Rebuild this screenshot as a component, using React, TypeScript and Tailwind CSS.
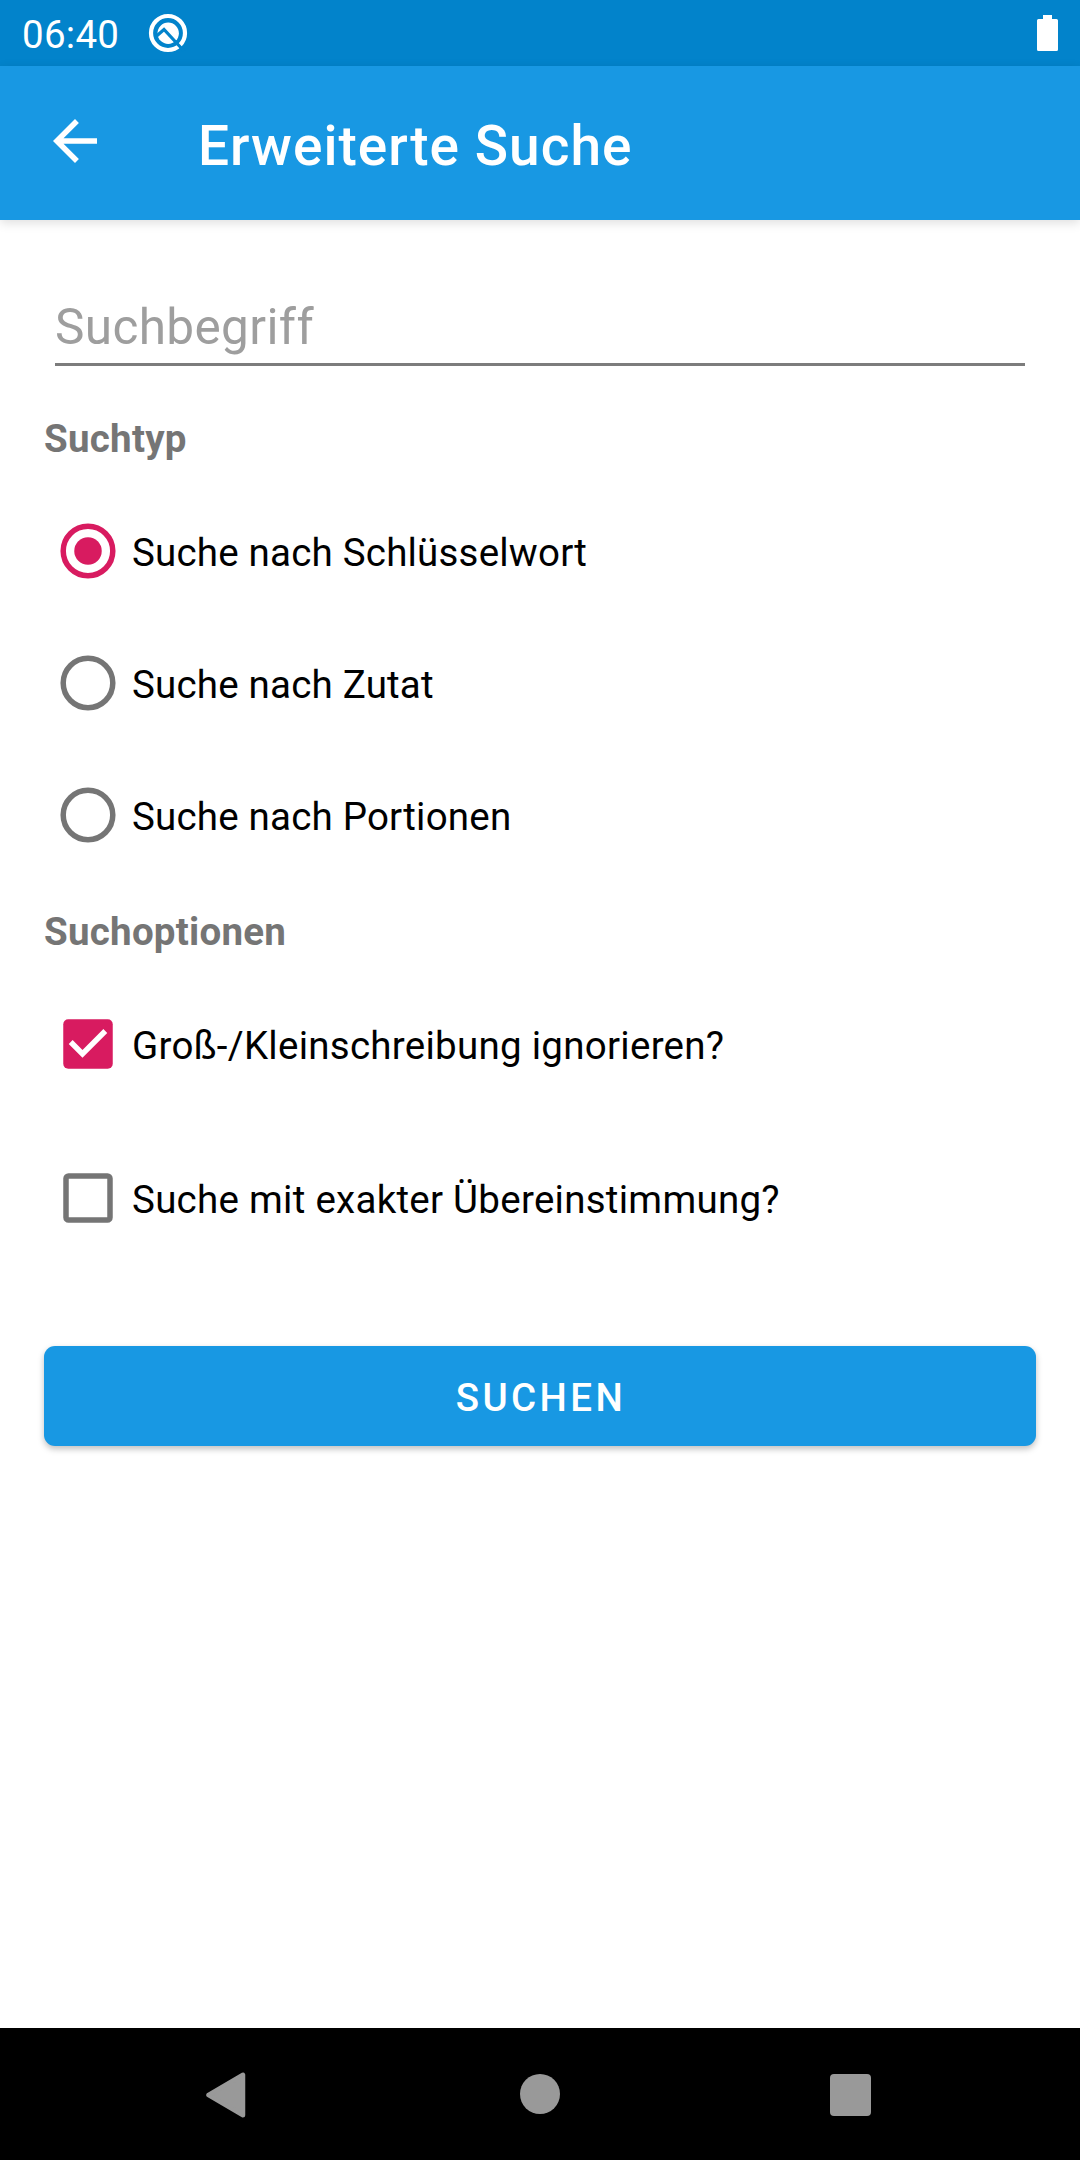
import { useState } from "react";

function StatusBar() {
  return (
    <div className="flex h-[66px] items-center bg-[#0283cb] pl-[22px] pr-[22px]">
      <span className="relative top-[1px] text-[38.5px] leading-[45px] tracking-[0.28px] text-white">06:40</span>
      <svg className="ml-[29px] size-[40px]" viewBox="0 0 40 40">
        <circle cx="20" cy="20" r="17" fill="none" stroke="#fff" strokeWidth="4.200" />
        <circle cx="20.200" cy="20.200" r="10.700" fill="#fff" />
        <path d="M8 23.500L16 16.500L36 38" fill="none" stroke="#0283cb" strokeWidth="3.200" />
      </svg>
      <svg className="ml-auto h-[36px] w-[21px]" viewBox="0 0 21 36">
        <path d="M6 0h9v4h4.500a1.500 1.500 0 0 1 1.500 1.500v29a1.500 1.500 0 0 1-1.500 1.500h-18a1.500 1.500 0 0 1-1.500-1.500v-29a1.500 1.500 0 0 1 1.500-1.500h4.500z" fill="#fff" />
      </svg>
    </div>
  );
}

function AppBar() {
  return (
    <header className="relative flex h-[154px] items-center bg-[#1898e3] pl-[42px] shadow-[0_3px_10px_rgba(0,0,0,0.13)]">
      <button aria-label="Zurück" className="-mt-[4px]">
        <svg className="size-[66px]" viewBox="0 0 24 24" fill="#fff">
          <path d="M20 11H7.830l5.590-5.590L12 4l-8 8 8 8 1.410-1.410L7.830 13H20v-2z" />
        </svg>
      </button>
      <h1 className="ml-[90px] mt-[5px] text-[55px] font-medium leading-[64px] tracking-[1.04px] text-white">
        Erweiterte Suche
      </h1>
    </header>
  );
}

function Radio({ label, checked, onSelect }: { label: string; checked: boolean; onSelect: () => void }) {
  return (
    <button role="radio" aria-checked={checked} onClick={onSelect} className="flex h-[132px] items-center">
      <svg className="size-[88px]" viewBox="0 0 88 88">
        <circle cx="44" cy="44" r="24.800" fill="none" stroke={checked ? "#d81b60" : "#757575"} strokeWidth="5.500" />
        {checked && <circle cx="44" cy="44" r="13.750" fill="#d81b60" />}
      </svg>
      <span className="mt-[3px] text-[38.5px] leading-[45px] tracking-[0.2px] text-black">{label}</span>
    </button>
  );
}

function Checkbox({ label, checked, onToggle }: { label: string; checked: boolean; onToggle: () => void }) {
  return (
    <button role="checkbox" aria-checked={checked} onClick={onToggle} className="flex h-[88px] items-center">
      <svg className="size-[88px]" viewBox="0 0 88 88">
        {checked ? (
          <>
            <rect x="19.250" y="19.250" width="49.500" height="49.500" rx="5" fill="#d81b60" />
            <path
              transform="translate(11 11) scale(2.75)"
              d="M10 17l-5-5 1.410-1.410L10 14.170l7.590-7.590L19 8l-9 9z"
              fill="#fff"
            />
          </>
        ) : (
          <rect x="22" y="22" width="44" height="44" rx="2.500" fill="none" stroke="#757575" strokeWidth="5.500" />
        )}
      </svg>
      <span className="mt-[3px] text-[38.5px] leading-[45px] tracking-[0.27px] text-black">{label}</span>
    </button>
  );
}

function NavBar() {
  return (
    <nav className="flex h-[132px] items-center justify-between bg-black pl-[205px] pr-[209px]">
      <svg className="mt-[1px] h-[46px] w-[45px]" viewBox="0 0 45 46">
        <path d="M3.500 23L38 2.800V43.200Z" fill="#999" stroke="#999" strokeWidth="4.500" strokeLinejoin="round" />
      </svg>
      <div className="size-[40px] rounded-full bg-[#999]" />
      <div className="mt-[1px] h-[42px] w-[41px] rounded-[4px] bg-[#999]" />
    </nav>
  );
}

const searchTypes = ["Suche nach Schlüsselwort", "Suche nach Zutat", "Suche nach Portionen"];

export default function App() {
  const [type, setType] = useState(0);
  const [ignoreCase, setIgnoreCase] = useState(true);
  const [exact, setExact] = useState(false);

  return (
    <div className="flex h-[2160px] w-[1080px] flex-col bg-white font-['Roboto',sans-serif]">
      <StatusBar />
      <AppBar />
      <main className="flex flex-1 flex-col px-[44px]">
        <input
          placeholder="Suchbegriff"
          className="mx-[11px] mt-[77px] h-[69px] border-b-[3px] border-[#7c7c7c] pb-[6px] text-[49.5px] leading-[58px] tracking-[0.37px] outline-none placeholder:text-[#9e9e9e]"
        />
        <h2 className="mt-[50px] text-[38.5px] font-bold leading-[45px] tracking-[0.25px] text-[#757575]">Suchtyp</h2>
        <div role="radiogroup" className="mt-[24px] flex flex-col">
          {searchTypes.map((label, i) => (
            <Radio key={label} label={label} checked={type === i} onSelect={() => setType(i)} />
          ))}
        </div>
        <h2 className="mt-[28px] text-[38.5px] font-bold leading-[45px] tracking-[0.25px] text-[#757575]">Suchoptionen</h2>
        <div className="mt-[46px] flex flex-col gap-[66px]">
          <Checkbox label="Groß-/Kleinschreibung ignorieren?" checked={ignoreCase} onToggle={() => setIgnoreCase(!ignoreCase)} />
          <Checkbox label="Suche mit exakter Übereinstimmung?" checked={exact} onToggle={() => setExact(!exact)} />
        </div>
        <button className="mt-[104px] h-[100px] rounded-[11px] bg-[#1898e3] pl-[2px] pt-[3px] text-[38.5px] font-medium leading-[45px] tracking-[0.0893em] text-white shadow-[0_3px_6px_rgba(0,0,0,0.25)]">
          SUCHEN
        </button>
      </main>
      <NavBar />
    </div>
  );
}
